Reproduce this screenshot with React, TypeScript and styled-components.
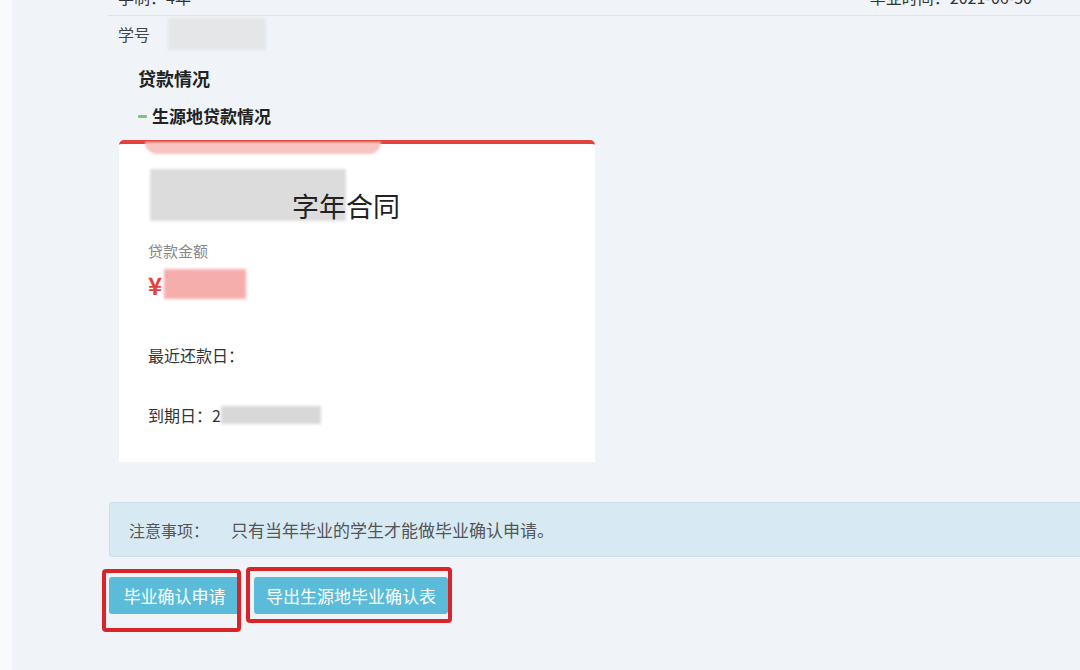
import React from "react";
import styled, { createGlobalStyle } from "styled-components";

const Global = createGlobalStyle`
  html, body { margin: 0; padding: 0; }
  body {
    width: 1080px; height: 670px; overflow: hidden;
    background: #f0f4f8;
    font-family: "Noto Sans CJK SC", "Microsoft YaHei", sans-serif;
    color: #333;
  }
`;

const Page = styled.div`
  display: flex;
  width: 1080px;
  height: 670px;
  overflow: hidden;
`;

const Gutter = styled.div`
  width: 12px;
  background: #f8fafb;
  flex: none;
`;

const Main = styled.div`
  flex: 1;
  padding-left: 96px;
  display: flex;
  flex-direction: column;
`;

const TopRow = styled.div`
  height: 15px;
  border-bottom: 1px solid #dde3e8;
  display: flex;
  justify-content: space-between;
  align-items: flex-end;
  padding: 0 48px 0 10px;
  font-size: 16px;
  line-height: 16px;
  color: #333;
  overflow: hidden;
  span { transform: translateY(-10px); }
`;

const IdRow = styled.div`
  display: flex;
  align-items: center;
  gap: 18px;
  height: 36px;
  padding-left: 10px;
  font-size: 16px;
  color: #444;
`;

const Blur = styled.div<{ $w: number; $h: number; $c: string; $ml?: number }>`
  width: ${(p) => p.$w}px;
  height: ${(p) => p.$h}px;
  margin-left: ${(p) => p.$ml ?? 0}px;
  background: ${(p) => p.$c};
  filter: blur(1.5px);
  flex: none;
`;

const SectionTitle = styled.div`
  margin: 14px 0 0 30px;
  font-size: 18px;
  font-weight: 700;
  color: #222;
  line-height: 24px;
`;

const SubTitle = styled.div`
  margin: 14px 0 0 30px;
  font-size: 17px;
  font-weight: 700;
  color: #222;
  line-height: 24px;
  display: flex;
  align-items: center;
  gap: 5px;
  &::before {
    content: "";
    width: 9px;
    height: 3px;
    background: #7cc576;
    border-radius: 1px;
  }
`;

const Card = styled.div`
  position: relative;
  margin: 12px 0 0 11px;
  width: 476px;
  height: 322px;
  box-sizing: border-box;
  background: #fff;
  border-top: 4px solid #e2443d;
  border-radius: 5px 5px 0 0;
  padding: 25px 0 0 29px;
  display: flex;
  flex-direction: column;
`;

const PinkSmear = styled.div`
  position: absolute;
  left: 26px;
  top: -2px;
  width: 236px;
  height: 12px;
  background: #f7c4c2;
  border-radius: 0 0 12px 12px;
  filter: blur(1px);
`;

const TitleRow = styled.div`
  display: flex;
  align-items: flex-end;
  height: 52px;
`;

const TitleText = styled.span`
  margin-left: -54px;
  font-size: 27px;
  color: #222;
  line-height: 30px;
  position: relative;
`;

const SmallLabel = styled.div`
  margin-top: 21px;
  font-size: 15px;
  color: #888;
  line-height: 18px;
`;

const AmountRow = styled.div`
  display: flex;
  align-items: center;
  margin-top: 7px;
  height: 34px;
  gap: 2px;
`;

const Yen = styled.span`
  font-size: 24px;
  font-weight: 700;
  color: #e2443d;
`;

const InfoLine = styled.div<{ $mt: number }>`
  margin-top: ${(p) => p.$mt}px;
  font-size: 16px;
  color: #333;
  line-height: 22px;
  display: flex;
  align-items: center;
`;

const Notice = styled.div`
  margin: 40px 0 0 1px;
  height: 55px;
  box-sizing: border-box;
  background: #d7eaf4;
  border: 1px solid #c9e0ec;
  border-right: none;
  border-radius: 4px 0 0 4px;
  display: flex;
  align-items: center;
  padding-left: 19px;
  font-size: 16px;
  color: #555;
  gap: 22px;
`;

const NoticeText = styled.span`
  font-size: 17px;
`;

const Buttons = styled.div`
  display: flex;
  gap: 14px;
  margin: 20px 0 0 1px;
`;

const Wrap = styled.div`
  position: relative;
`;

const Button = styled.button<{ $w: number }>`
  width: ${(p) => p.$w}px;
  height: 37px;
  border: none;
  border-radius: 3px;
  background: #5bbcd9;
  color: #fff;
  font-family: inherit;
  font-size: 17px;
  padding: 0;
`;

const Mark = styled.div<{ $l: number; $t: number; $w: number; $h: number }>`
  position: absolute;
  left: ${(p) => p.$l}px;
  top: ${(p) => p.$t}px;
  width: ${(p) => p.$w}px;
  height: ${(p) => p.$h}px;
  border: 4px solid #d9252a;
  border-radius: 4px;
  box-sizing: border-box;
  pointer-events: none;
`;

export default function App() {
  return (
    <>
      <Global />
      <Page>
        <Gutter />
        <Main>
          <TopRow>
            <span>学制：4年</span>
            <span>毕业时间：2021-06-30</span>
          </TopRow>
          <IdRow>
            <span>学号</span>
            <Blur $w={98} $h={32} $c="#e4e6e8" />
          </IdRow>
          <SectionTitle>贷款情况</SectionTitle>
          <SubTitle>生源地贷款情况</SubTitle>
          <Card>
            <PinkSmear />
            <TitleRow>
              <Blur $w={196} $h={52} $c="#dcdcdc" $ml={2} />
              <TitleText>字年合同</TitleText>
            </TitleRow>
            <SmallLabel>贷款金额</SmallLabel>
            <AmountRow>
              <Yen>¥</Yen>
              <Blur $w={82} $h={30} $c="#f6aeac" />
            </AmountRow>
            <InfoLine $mt={43}>最近还款日：</InfoLine>
            <InfoLine $mt={38}>
              到期日：2
              <Blur $w={100} $h={18} $c="#d8d8d8" />
            </InfoLine>
          </Card>
          <Notice>
            <span>注意事项：</span>
            <NoticeText>只有当年毕业的学生才能做毕业确认申请。</NoticeText>
          </Notice>
          <Buttons>
            <Wrap>
              <Button $w={131}>毕业确认申请</Button>
              <Mark $l={-7} $t={-8} $w={139} $h={63} />
            </Wrap>
            <Wrap>
              <Button $w={194}>导出生源地毕业确认表</Button>
              <Mark $l={-8} $t={-10} $w={206} $h={56} />
            </Wrap>
          </Buttons>
        </Main>
      </Page>
    </>
  );
}
